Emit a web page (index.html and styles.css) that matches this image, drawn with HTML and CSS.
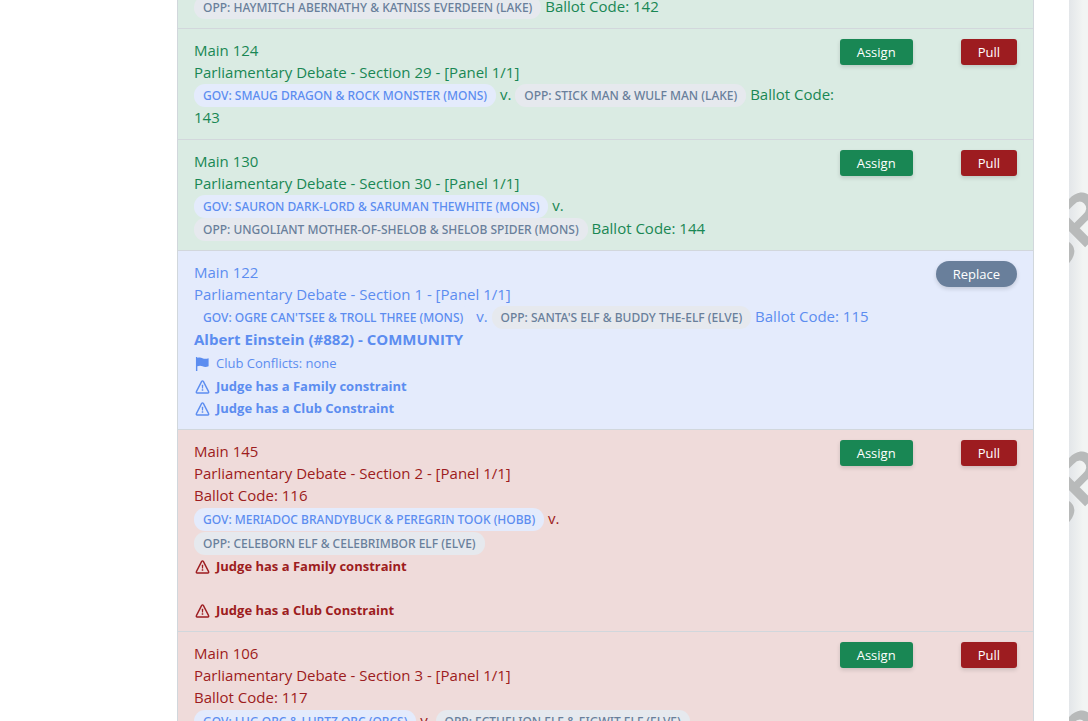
FILE: index.html
```html
<!DOCTYPE html>
<html lang="en">
<head>
<meta charset="utf-8">
<title>Ballots</title>
<link rel="stylesheet" href="styles.css">
</head>
<body>
<svg class="defs" aria-hidden="true">
  <symbol id="warn" viewBox="0 0 16 16">
    <path d="M7.1 2.600a1 1 0 0 1 1.800 0l5.600 10.900a.9.9 0 0 1-.8 1.400H2.300a.9.9 0 0 1-.8-1.400z" fill="none" stroke="currentColor" stroke-width="1.500"/>
    <path d="M7.2 6h1.6l-.2 4H7.400zM7.200 11h1.6v1.600H7.200z" fill="currentColor"/>
  </symbol>
  <symbol id="flag" viewBox="0 0 16 16">
    <path d="M1 1h1.500v1c2-.8 3.800-.6 5.500.3 1.900.9 3.900.9 6.500 0v8.700c-2.600 1-4.600.8-6.500-.1-1.700-.8-3.500-.8-5.500 0V16H1z" fill="currentColor"/>
  </symbol>
</svg>
<div class="layout">
  <main class="page">
    <ul class="list">
      <li class="item ready clipped">
        <div class="info">
          <div class="teams"><span class="badge opp">OPP: HAYMITCH ABERNATHY &amp; KATNISS EVERDEEN (LAKE)</span> Ballot Code: 142</div>
        </div>
      </li>
      <li class="item ready">
        <div class="info">
          <div>Main 124</div>
          <div>Parliamentary Debate - Section 29 - [Panel 1/1]</div>
          <div class="teams"><span class="badge gov">GOV: SMAUG DRAGON &amp; ROCK MONSTER (MONS)</span> v. <span class="badge opp">OPP: STICK MAN &amp; WULF MAN (LAKE)</span> Ballot Code: 143</div>
        </div>
        <div class="actions"><button class="btn assign">Assign</button><button class="btn pull">Pull</button></div>
      </li>
      <li class="item ready">
        <div class="info">
          <div>Main 130</div>
          <div>Parliamentary Debate - Section 30 - [Panel 1/1]</div>
          <div class="teams"><span class="badge gov">GOV: SAURON DARK-LORD &amp; SARUMAN THEWHITE (MONS)</span> v. <span class="badge opp">OPP: UNGOLIANT MOTHER-OF-SHELOB &amp; SHELOB SPIDER (MONS)</span> Ballot Code: 144</div>
        </div>
        <div class="actions"><button class="btn assign">Assign</button><button class="btn pull">Pull</button></div>
      </li>
      <li class="item assigned">
        <div class="info">
          <div>Main 122</div>
          <div>Parliamentary Debate - Section 1 - [Panel 1/1]</div>
          <div class="teams"><span class="badge gov">GOV: OGRE CAN'TSEE &amp; TROLL THREE (MONS)</span> v. <span class="badge opp">OPP: SANTA'S ELF &amp; BUDDY THE-ELF (ELVE)</span> Ballot Code: 115</div>
          <div class="judge">Albert Einstein (#882) - COMMUNITY</div>
          <div class="note plain"><svg class="icon"><use href="#flag"/></svg>Club Conflicts: none</div>
          <div class="note"><svg class="icon"><use href="#warn"/></svg>Judge has a Family constraint</div>
          <div class="note"><svg class="icon"><use href="#warn"/></svg>Judge has a Club Constraint</div>
        </div>
        <div class="actions"><button class="btn replace">Replace</button></div>
      </li>
      <li class="item blocked">
        <div class="info">
          <div>Main 145</div>
          <div>Parliamentary Debate - Section 2 - [Panel 1/1]</div>
          <div>Ballot Code: 116</div>
          <div class="teams"><span class="badge gov">GOV: MERIADOC BRANDYBUCK &amp; PEREGRIN TOOK (HOBB)</span> v. <span class="badge opp">OPP: CELEBORN ELF &amp; CELEBRIMBOR ELF (ELVE)</span></div>
          <div class="note spaced"><svg class="icon"><use href="#warn"/></svg>Judge has a Family constraint</div>
          <div class="note"><svg class="icon"><use href="#warn"/></svg>Judge has a Club Constraint</div>
        </div>
        <div class="actions"><button class="btn assign">Assign</button><button class="btn pull">Pull</button></div>
      </li>
      <li class="item blocked">
        <div class="info">
          <div>Main 106</div>
          <div>Parliamentary Debate - Section 3 - [Panel 1/1]</div>
          <div>Ballot Code: 117</div>
          <div class="teams"><span class="badge gov">GOV: LUG ORC &amp; LURTZ ORC (ORCS)</span> v. <span class="badge opp">OPP: ECTHELION ELF &amp; EIGWIT ELF (ELVE)</span></div>
        </div>
        <div class="actions"><button class="btn assign">Assign</button><button class="btn pull">Pull</button></div>
      </li>
    </ul>
  </main>
  <aside class="backdrop" aria-hidden="true">
    <span class="mark first">BR</span>
    <span class="mark second">BR</span>
    <span class="mark third">BR</span>
  </aside>
</div>
</body>
</html>
```
FILE: styles.css
```css
* { box-sizing: border-box; }

body {
  margin: 0;
  height: 100vh;
  overflow: hidden;
  background: #fff;
  font: 15px/22px "Open Sans", "Noto Sans", sans-serif;
}

.defs { display: none; }

.layout { display: flex; height: 100%; }

.page { flex: 1; min-width: 0; padding: 0 35px 0 177px; }

.list {
  list-style: none;
  margin: 0;
  padding: 0;
  border: 1px solid #d1d7dc;
  border-width: 0 1px;
}

.item {
  display: flex;
  align-items: flex-start;
  padding: 10px 16px;
  border-bottom: 1px solid #d1d7dc;
}

.clipped { padding-top: 0; margin-top: -5px; }
.ready { background: #daebe3; color: #198754; border-color: #d2d7dc; }
.assigned { background: #e4ebfc; color: #5c8df0; }
.blocked { background: #efdbda; color: #9d1c20; }

.info { flex: 1; min-width: 0; }
.teams { line-height: 23px; }
.blocked .teams { line-height: 24px; }

.badge {
  padding: 3px 9px;
  border-radius: 11px;
  font-family: "Noto Sans", "Open Sans", sans-serif;
  font-size: 12px;
  font-weight: 500;
  line-height: 12px;
  white-space: nowrap;
}

.gov { background: #e4ebfc; color: #5c8df0; }
.opp { background: #e6e9ee; color: #697f9b; }

.judge { font-weight: 700; line-height: 23px; }

.note {
  display: flex;
  align-items: center;
  gap: 6px;
  padding-left: 1px;
  font-size: 13px;
  font-weight: 700;
}

.plain { font-weight: 400; line-height: 24px; }
.spaced { line-height: 24px; margin-bottom: 21px; }
.icon { width: 15px; height: 15px; flex: none; }

.actions { display: flex; gap: 48px; }

.btn {
  height: 26px;
  padding: 0 17px;
  border: 0;
  border-radius: 3px;
  color: #fff;
  font: 500 13px/26px "Open Sans", "Noto Sans", sans-serif;
  box-shadow: 0 2px 4px rgb(0 0 0 / 14%);
}

.assign { background: #198754; }
.pull { background: #9d1c20; }
.replace { background: #697f9b; border-radius: 13px; }

.backdrop {
  position: relative;
  flex: 0 0 19px;
  overflow: hidden;
  background: linear-gradient(90deg, #e3e6e9, #f2f4f3 14px);
}

.mark {
  position: absolute;
  left: -51px;
  color: #b8baba;
  font: 700 66px/64px "Liberation Sans", sans-serif;
  transform: rotate(-45deg);
}

.first { top: 202px; }
.second { top: 461px; }
.third { top: 720px; }
```
